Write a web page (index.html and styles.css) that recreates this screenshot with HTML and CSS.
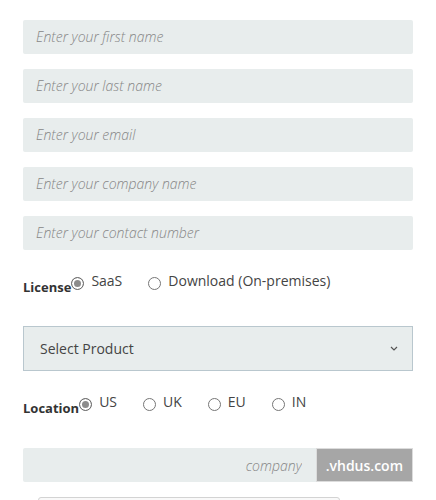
FILE: index.html
```html
<!DOCTYPE html>
<html lang="en">

<head>
    <meta charset="UTF-8">
    <meta name="viewport" content="width=device-width, initial-scale=1.0">
    <title>Sign Up</title>
    <link rel="stylesheet" href="styles.css">
</head>

<body>
    <form class="signup-form">
        <input class="field" type="text" placeholder="Enter your first name">
        <input class="field" type="text" placeholder="Enter your last name">
        <input class="field" type="email" placeholder="Enter your email">
        <input class="field" type="text" placeholder="Enter your company name">
        <input class="field" type="tel" placeholder="Enter your contact number">

        <div class="choice-row license-row">
            <span class="choice-label">License</span>
            <label class="radio-option"><input type="radio" name="license" checked><span>SaaS</span></label>
            <label class="radio-option"><input type="radio" name="license"><span>Download (On-premises)</span></label>
        </div>

        <div class="select-wrap">
            <select class="product-select">
                <option>Select Product</option>
            </select>
            <svg class="chevron" width="8" height="5" viewBox="0 0 8 5">
                <path d="M1 1 L4 4 L7 1" fill="none" stroke="#555" stroke-width="1.2" />
            </svg>
        </div>

        <div class="choice-row location-row">
            <span class="choice-label">Location</span>
            <label class="radio-option"><input type="radio" name="location" checked><span>US</span></label>
            <label class="radio-option"><input type="radio" name="location"><span>UK</span></label>
            <label class="radio-option"><input type="radio" name="location"><span>EU</span></label>
            <label class="radio-option"><input type="radio" name="location"><span>IN</span></label>
        </div>

        <div class="domain-group">
            <input class="domain-input" type="text" placeholder="company">
            <span class="domain-addon">.vhdus.com</span>
        </div>

        <div class="captcha-box"></div>
    </form>
</body>

</html>
```

FILE: styles.css
```css
body {
    font-family: "Open Sans", sans-serif;
    margin: 0;
    background: #ffffff;
    color: #333333;
    height: 500px;
    overflow: hidden;
}

.signup-form {
    display: flex;
    flex-direction: column;
    padding: 20px 23px 0 23px;
}

.field {
    height: 34px;
    box-sizing: border-box;
    border: none;
    border-radius: 2px;
    background-color: #e8eded;
    padding: 0 13px 1px 13px;
    margin-bottom: 15px;
    font-family: "Open Sans", sans-serif;
    font-size: 14px;
}

.field::placeholder,
.domain-input::placeholder {
    color: #868686;
    font-style: italic;
    font-weight: 300;
}

.choice-row {
    display: flex;
    align-items: center;
    height: 20px;
}

.license-row {
    margin-top: 8px;
}

.location-row {
    margin-top: 23px;
}

.choice-label {
    font-size: 13px;
    font-weight: 700;
    color: #333333;
    position: relative;
    top: 4px;
}

.radio-option {
    display: inline-flex;
    align-items: center;
    gap: 7px;
    margin-right: 26px;
    font-size: 14px;
    color: #444444;
    line-height: 20px;
}

.radio-option span {
    position: relative;
    top: -2px;
}

.radio-option input {
    appearance: none;
    width: 13px;
    height: 13px;
    margin: 0;
    border: 1px solid #767676;
    border-radius: 50%;
    box-sizing: border-box;
    background: #ffffff;
}

.radio-option input:checked {
    border: 1px solid #6b6b6b;
    box-shadow: inset 0 0 0 2px #ffffff;
    background: #8c8c8c;
}

.select-wrap {
    position: relative;
    margin-top: 33px;
}

.product-select {
    appearance: none;
    width: 100%;
    height: 45px;
    box-sizing: border-box;
    border: 1px solid #b9c7ce;
    border-radius: 0;
    background-color: #e8eded;
    padding: 0 16px;
    font-family: "Open Sans", sans-serif;
    font-size: 14px;
    color: #444444;
}

.chevron {
    position: absolute;
    right: 15px;
    top: 20px;
    pointer-events: none;
}

.domain-group {
    display: flex;
    height: 34px;
    margin-top: 34px;
}

.domain-input {
    flex: 1;
    min-width: 0;
    border: none;
    border-radius: 2px 0 0 2px;
    background-color: #e8eded;
    padding: 0 14px;
    text-align: right;
    font-family: "Open Sans", sans-serif;
    font-size: 14px;
}

.domain-addon {
    display: flex;
    align-items: center;
    padding: 0 9px;
    background-color: #a6a6a6;
    border: 1px solid #dcdcdc;
    color: #ffffff;
    font-size: 14px;
    font-weight: 600;
}

.captcha-box {
    width: 302px;
    height: 76px;
    box-sizing: border-box;
    margin: 15px 0 0 15px;
    border: 1px solid #d3d3d3;
    border-radius: 3px;
    background: #f9f9f9;
}
```
